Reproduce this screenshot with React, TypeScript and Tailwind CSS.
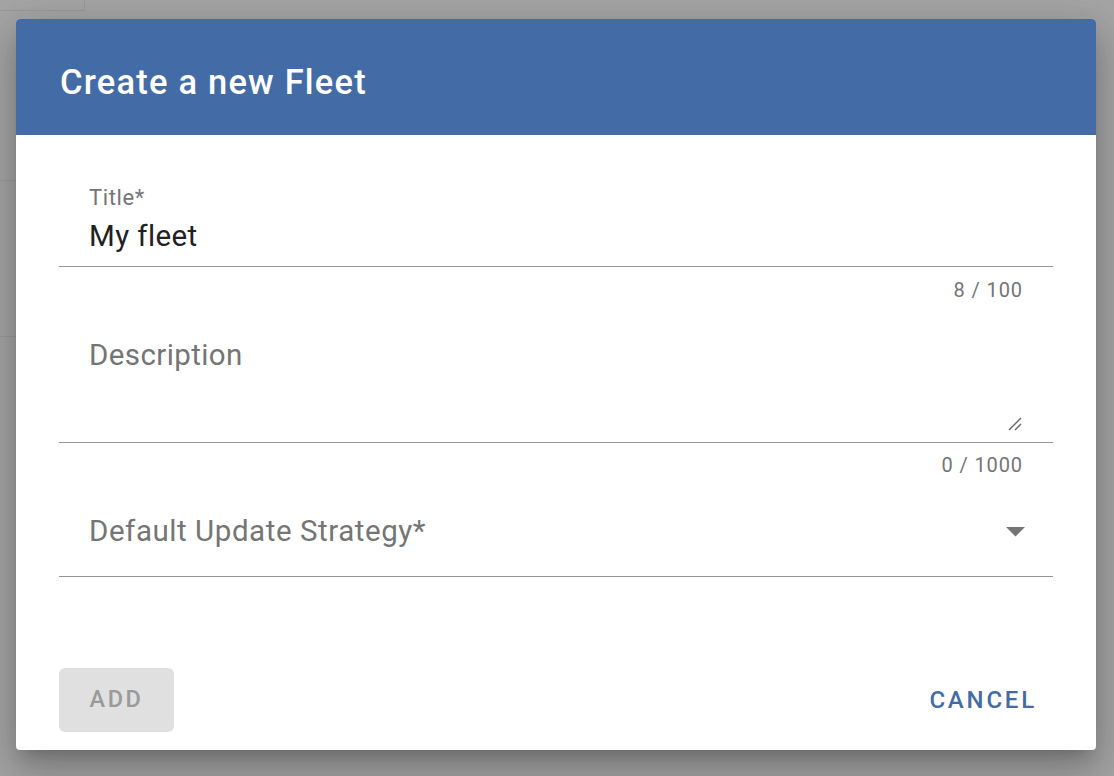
export default function App() {
  return (
    <div className="relative w-[1114px] h-[776px] overflow-hidden bg-[#a5a5a5] font-['Roboto',sans-serif]">
      {/* page behind the backdrop */}
      <div className="absolute left-0 top-0 w-[85px] h-[11px] border-r border-b border-[#9a9a9a]" />
      <div className="absolute left-0 top-[180px] w-[16px] border-t border-[#9a9a9a]" />
      <div className="absolute left-0 top-[336px] w-[16px] border-t border-[#9a9a9a]" />

      {/* dialog */}
      <div className="absolute left-[16px] top-[19px] w-[1080px] h-[731px] bg-white rounded-[4px] overflow-hidden shadow-[0_11px_15px_-7px_rgba(0,0,0,0.2),0_24px_38px_3px_rgba(0,0,0,0.14),0_9px_46px_8px_rgba(0,0,0,0.12)] flex flex-col">
        <div className="h-[116px] bg-[#436ca6] flex items-center px-[44px] pt-[12px]">
          <h2 className="text-white text-[34.5px] font-medium tracking-[1.2px]">Create a new Fleet</h2>
        </div>

        <div className="flex-1 flex flex-col px-[43px] pt-[50px]">
          {/* Title */}
          <div className="flex flex-col">
            <div className="border-b border-[#949494] px-[30px] pb-[14px]">
              <div className="text-[#757575] text-[22px] leading-[26px] tracking-[0.6px]">Title*</div>
              <div className="text-[#212121] text-[29.5px] leading-[32px] mt-[9px] tracking-[0.4px]">My fleet</div>
            </div>
            <div className="text-right pr-[30px] pt-[11px] text-[#757575] text-[20px] leading-[24px] tracking-[0.9px]">8 / 100</div>
          </div>

          {/* Description */}
          <div className="flex flex-col mt-[23px]">
            <div className="relative border-b border-[#949494] px-[30px] h-[118px]">
              <div className="text-[#757575] text-[29.5px] leading-[32px] pt-[14px] tracking-[0.4px]">Description</div>
              <svg className="absolute right-[30px] bottom-[10px]" width="16" height="16" viewBox="0 0 16 16">
                <path d="M2 14 L14 2 M8 14 L14 8" stroke="#666" strokeWidth="1.4" fill="none" />
              </svg>
            </div>
            <div className="text-right pr-[30px] pt-[10px] text-[#757575] text-[20px] leading-[24px] tracking-[0.9px]">0 / 1000</div>
          </div>

          {/* Default Update Strategy */}
          <div className="flex items-start border-b border-[#949494] px-[30px] h-[100px] pt-[38px]">
            <div className="flex-1 text-[#757575] text-[29.5px] leading-[32px] tracking-[0.55px]">Default Update Strategy*</div>
            <svg className="mt-[12px] mr-[-2px]" width="19" height="10" viewBox="0 0 19 10">
              <path d="M0 0 L19 0 L9.5 9.5 Z" fill="#757575" />
            </svg>
          </div>

          <div className="flex-1" />

          {/* actions */}
          <div className="flex items-center justify-between pb-[18px] pr-[6px]">
            <button className="w-[115px] h-[64px] rounded-[6px] bg-[#e0e0e0] text-[#9a9a9a] text-[23.5px] font-medium tracking-[2.6px]">ADD</button>
            <button className="h-[64px] px-[10px] text-[#436ca6] text-[24px] font-medium tracking-[2.8px]">CANCEL</button>
          </div>
        </div>
      </div>
    </div>
  );
}
